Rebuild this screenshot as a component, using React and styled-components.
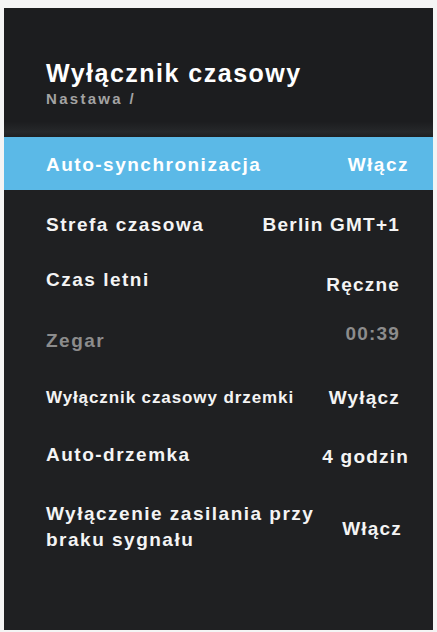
import React from "react";
import styled, { createGlobalStyle } from "styled-components";

const Global = createGlobalStyle`
  html, body { margin: 0; padding: 0; background: #f4f4f4; }
  body { font-family: "Liberation Sans", Arial, sans-serif; }
`;

const Page = styled.div`
  width: 437px;
  height: 632px;
  padding: 8px 4px 2px 4px;
  box-sizing: border-box;
`;

const Panel = styled.div`
  height: 100%;
  background: #1f2022;
  display: flex;
  flex-direction: column;
  color: #f2f2f2;
  font-weight: bold;
`;

const Header = styled.div`
  height: 129px;
  box-sizing: border-box;
  padding: 51px 0 0 42px;
  background: linear-gradient(to bottom, #1c1d1f 0%, #1c1d1f 88%, #26282a 96%, #1f2022 100%);
`;

const Title = styled.div`
  font-size: 25px;
  letter-spacing: 1.5px;
  line-height: 28px;
  color: #ffffff;
`;

const Subtitle = styled.div`
  font-size: 15px;
  letter-spacing: 2.3px;
  line-height: 17px;
  color: #a3a3a3;
  margin-top: 3px;
`;

const Highlight = styled.div`
  height: 53px;
  background: #5bb9e7;
  display: flex;
  align-items: center;
  justify-content: space-between;
  padding: 2px 24px 0 42px;
  box-sizing: border-box;
  font-size: 19px;
  letter-spacing: 1.5px;
  color: #ffffff;
`;

const List = styled.div`
  padding-top: 6px;
  display: flex;
  flex-direction: column;
`;

const Row = styled.div`
  height: ${(p) => p.$h || 57}px;
  display: flex;
  align-items: center;
  justify-content: space-between;
  padding: 0 ${(p) => p.$pr || 33}px 0 42px;
  color: ${(p) => (p.$dim ? "#8c8c8c" : "#f4f4f4")};
`;

const Label = styled.span`
  font-size: ${(p) => p.$fs || 19}px;
  letter-spacing: ${(p) => p.$ls || 1.5}px;
  line-height: 26px;
  margin-top: ${(p) => p.$dy || 0}px;
`;

const Value = styled.span`
  font-size: 19px;
  letter-spacing: 1.2px;
  line-height: 26px;
  margin-top: ${(p) => p.$dy || 0}px;
  text-align: right;
`;

const rows = [
  { l: "Strefa czasowa", v: "Berlin GMT+1", ldy: 1, vdy: 1 },
  { l: "Czas letni", v: "Ręczne", ldy: -3, vdy: 7 },
  { l: "Zegar", v: "00:39", dim: true, ldy: 4, vdy: -9 },
  { l: "Wyłącznik czasowy drzemki", v: "Wyłącz", fs: 17, ls: 0.9, ldy: 4, vdy: 4 },
  { l: "Auto-drzemka", v: "4 godzin", ldy: 4, vdy: 9, pr: 24 },
  { l: "Wyłączenie zasilania przy\nbraku sygnału", v: "Włącz", h: 88, pr: 31, ldy: 3, vdy: 8 },
];

export default function App() {
  return (
    <>
      <Global />
      <Page>
        <Panel>
          <Header>
            <Title>Wyłącznik czasowy</Title>
            <Subtitle>Nastawa /</Subtitle>
          </Header>
          <Highlight>
            <span>Auto-synchronizacja</span>
            <span>Włącz</span>
          </Highlight>
          <List>
            {rows.map((r) => (
              <Row key={r.l} $dim={r.dim} $h={r.h} $pr={r.pr}>
                <Label $dy={r.ldy} $fs={r.fs} $ls={r.ls}>
                  {r.l.split("\n").map((t, i) => (
                    <React.Fragment key={i}>
                      {i > 0 && <br />}
                      {t}
                    </React.Fragment>
                  ))}
                </Label>
                <Value $dy={r.vdy}>{r.v}</Value>
              </Row>
            ))}
          </List>
        </Panel>
      </Page>
    </>
  );
}
